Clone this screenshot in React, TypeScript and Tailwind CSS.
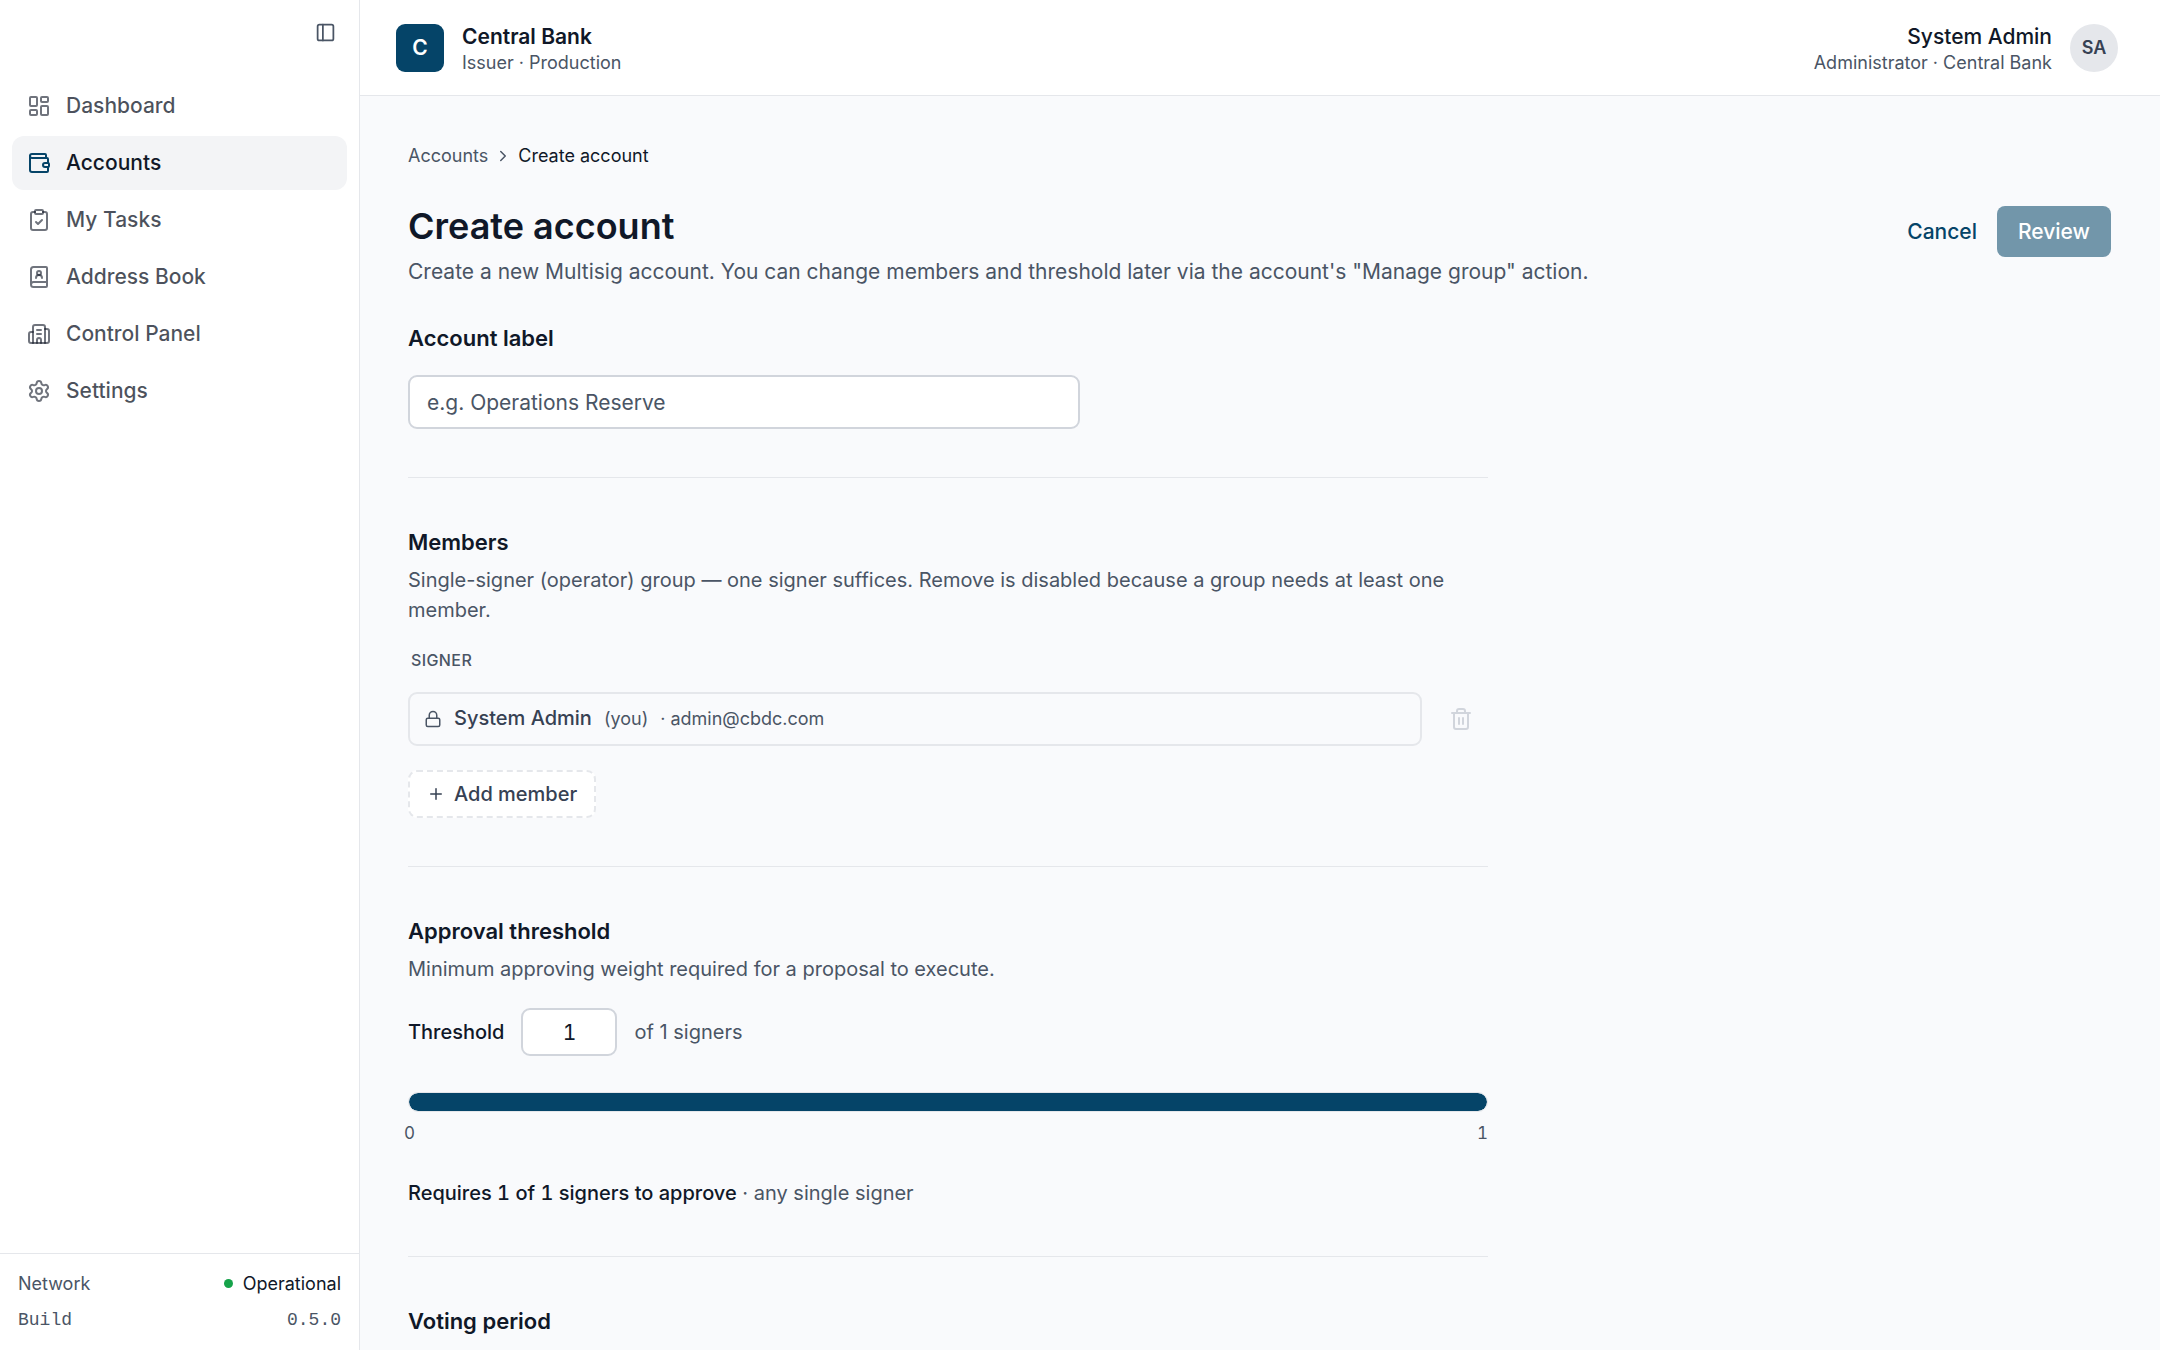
import { BookUser, Building2, ChevronRight, ClipboardCheck, LayoutDashboard, Lock, PanelLeft, Plus, Settings, Trash2, Wallet } from "lucide-react";

const navItems = [
  { label: "Dashboard", icon: LayoutDashboard },
  { label: "Accounts", icon: Wallet, active: true },
  { label: "My Tasks", icon: ClipboardCheck },
  { label: "Address Book", icon: BookUser },
  { label: "Control Panel", icon: Building2 },
  { label: "Settings", icon: Settings },
];

function Sidebar() {
  return (
    <aside className="flex w-[360px] shrink-0 flex-col border-r border-gray-200 bg-white">
      <div className="flex justify-end px-[23px] pt-[22px]">
        <button type="button" aria-label="Collapse sidebar" className="text-gray-600">
          <PanelLeft size={21} strokeWidth={2} />
        </button>
      </div>
      <nav aria-label="Main" className="mt-9 flex flex-1 flex-col gap-[3px] px-3">
        {navItems.map(({ label, icon: Icon, active }) => (
          <a
            key={label}
            href="#"
            aria-current={active ? "page" : undefined}
            className={
              active
                ? "flex h-[54px] items-center gap-[15px] rounded-xl bg-gray-100 px-[15px] text-[21px] font-medium text-[#111827]"
                : "flex h-[54px] items-center gap-[15px] rounded-xl px-[15px] text-[21px] font-medium text-[#111827]/75"
            }
          >
            <Icon size={24} strokeWidth={2} className={active ? "text-[#054468]" : "text-[#111827]/60"} />
            {label}
          </a>
        ))}
      </nav>
      <dl className="flex flex-col gap-[10px] border-t border-gray-200 px-[18px] py-4 text-lg leading-[27px]">
        <div className="flex justify-between">
          <dt className="text-gray-600">Network</dt>
          <dd className="flex items-center gap-[10px] text-gray-900">
            <span className="size-[9px] rounded-full bg-[#16a34a]" />
            Operational
          </dd>
        </div>
        <div className="flex justify-between font-['Liberation_Mono',monospace] text-gray-600">
          <dt>Build</dt>
          <dd>0.5.0</dd>
        </div>
      </dl>
    </aside>
  );
}

function Header() {
  return (
    <header className="flex h-24 shrink-0 items-start justify-between border-b border-gray-200 bg-white pt-6 pr-[42px] pl-9">
      <div className="flex h-12 items-center gap-[18px]">
        <div className="flex size-12 items-center justify-center rounded-[9px] bg-[#054468] text-[21px] font-semibold text-white">C</div>
        <div className="pt-0.5">
          <div className="text-[21px] leading-[27px] font-semibold text-gray-900">Central Bank</div>
          <div className="text-lg leading-[25px] text-gray-600">Issuer · Production</div>
        </div>
      </div>
      <div className="flex h-12 items-center gap-[18px]">
        <div className="pt-0.5 text-right">
          <div className="text-[21px] leading-[27px] font-medium text-gray-900">System Admin</div>
          <div className="text-lg leading-[25px] text-gray-600">Administrator · Central Bank</div>
        </div>
        <div className="flex size-12 items-center justify-center rounded-full bg-gray-200 text-lg font-semibold text-gray-700">SA</div>
      </div>
    </header>
  );
}

function TitleBar() {
  return (
    <>
      <nav aria-label="Breadcrumb" className="flex items-center gap-[6px] text-lg leading-[27px]">
        <a href="#" className="text-gray-600">Accounts</a>
        <ChevronRight size={18} strokeWidth={2} className="text-gray-600" />
        <span className="text-gray-900">Create account</span>
      </nav>
      <div className="mt-[35px] flex items-start justify-between">
        <div>
          <h1 className="text-4xl leading-[45px] font-semibold text-gray-900">Create account</h1>
          <p className="mt-[6px] text-[21px] leading-[33px] text-gray-600">
            Create a new Multisig account. You can change members and threshold later via the account's "Manage group" action.
          </p>
        </div>
        <div className="flex items-center pt-0.5 text-[21px] font-medium">
          <button type="button" className="px-5 text-[#054468]">Cancel</button>
          <button type="button" disabled className="h-[51px] rounded-lg bg-[#7296aa] px-[21px] text-white">Review</button>
        </div>
      </div>
    </>
  );
}

export default function App() {
  return (
    <div className="flex h-screen overflow-hidden bg-[#f9fafc] font-[Inter,sans-serif]">
      <Sidebar />
      <div className="flex min-w-0 flex-1 flex-col">
        <Header />
        <main className="flex-1 overflow-hidden pt-[46px] pr-[49px] pl-12">
          <TitleBar />
          <form className="flex max-w-[1080px] flex-col">
            <section className="border-b border-gray-200 pt-[34px] pb-12">
              <label htmlFor="label" className="block text-[22px] leading-[33px] font-semibold text-gray-900">Account label</label>
              <input
                id="label"
                placeholder="e.g. Operations Reserve"
                className="mt-5 block h-[54px] w-full max-w-[672px] rounded-[9px] border-2 border-gray-300 bg-white px-[17px] text-[21px] text-gray-900 placeholder:text-gray-600"
              />
            </section>
            <section className="border-b border-gray-200 py-12">
              <h2 className="text-[22px] leading-[33px] font-semibold text-gray-900">Members</h2>
              <p className="mt-[6px] text-[20px] leading-[30px] text-gray-600">
                Single-signer (operator) group — one signer suffices. Remove is disabled because a group needs at least one member.
              </p>
              <div className="mt-[23px] px-[3px] text-base leading-6 font-medium tracking-wide text-gray-600">SIGNER</div>
              <div className="mt-5 flex items-center">
                <div className="flex h-[54px] flex-1 items-center gap-3 rounded-[9px] border-2 border-gray-200 px-[14px] text-lg text-gray-600">
                  <Lock size={18} strokeWidth={2} />
                  <span className="text-[20px] font-medium text-gray-700">System Admin</span>
                  <span>(you)</span>
                  <span>· admin@cbdc.com</span>
                </div>
                <button type="button" disabled aria-label="Remove member" className="mr-[15px] ml-[27px] text-gray-300">
                  <Trash2 size={24} strokeWidth={2} />
                </button>
              </div>
              <button
                type="button"
                className="mt-6 flex h-12 items-center gap-[9px] rounded-[9px] border-2 border-dashed border-gray-200 bg-white px-[17px] text-[20px] font-medium text-gray-700"
              >
                <Plus size={18} strokeWidth={2} />
                Add member
              </button>
            </section>
            <section className="border-b border-gray-200 py-12">
              <h2 className="text-[22px] leading-[33px] font-semibold text-gray-900">Approval threshold</h2>
              <p className="mt-[6px] text-[20px] leading-[30px] text-gray-600">Minimum approving weight required for a proposal to execute.</p>
              <div className="mt-6 flex items-center gap-[17px] text-[20px] text-gray-600">
                <label htmlFor="threshold" className="font-medium text-gray-900">Threshold</label>
                <input
                  id="threshold"
                  defaultValue="1"
                  inputMode="numeric"
                  className="h-12 w-24 rounded-[9px] border-2 border-gray-300 bg-white text-center text-[21px] text-gray-900 tabular-nums"
                />
                <span>of 1 signers</span>
              </div>
              <div className="mt-9 h-5 rounded-full border border-gray-200 bg-[#054468] bg-clip-padding" />
              <div className="mt-[9px] -ml-1 flex justify-between text-[17px] leading-6 text-gray-600 tabular-nums">
                <span>0</span>
                <span>1</span>
              </div>
              <p className="mt-[33px] text-[20px] leading-[30px] text-gray-600">
                <span className="font-medium text-gray-900 tabular-nums">Requires 1 of 1 signers to approve</span> · any single signer
              </p>
            </section>
            <section className="py-12">
              <h2 className="text-[22px] leading-[33px] font-semibold text-gray-900">Voting period</h2>
            </section>
          </form>
        </main>
      </div>
    </div>
  );
}
